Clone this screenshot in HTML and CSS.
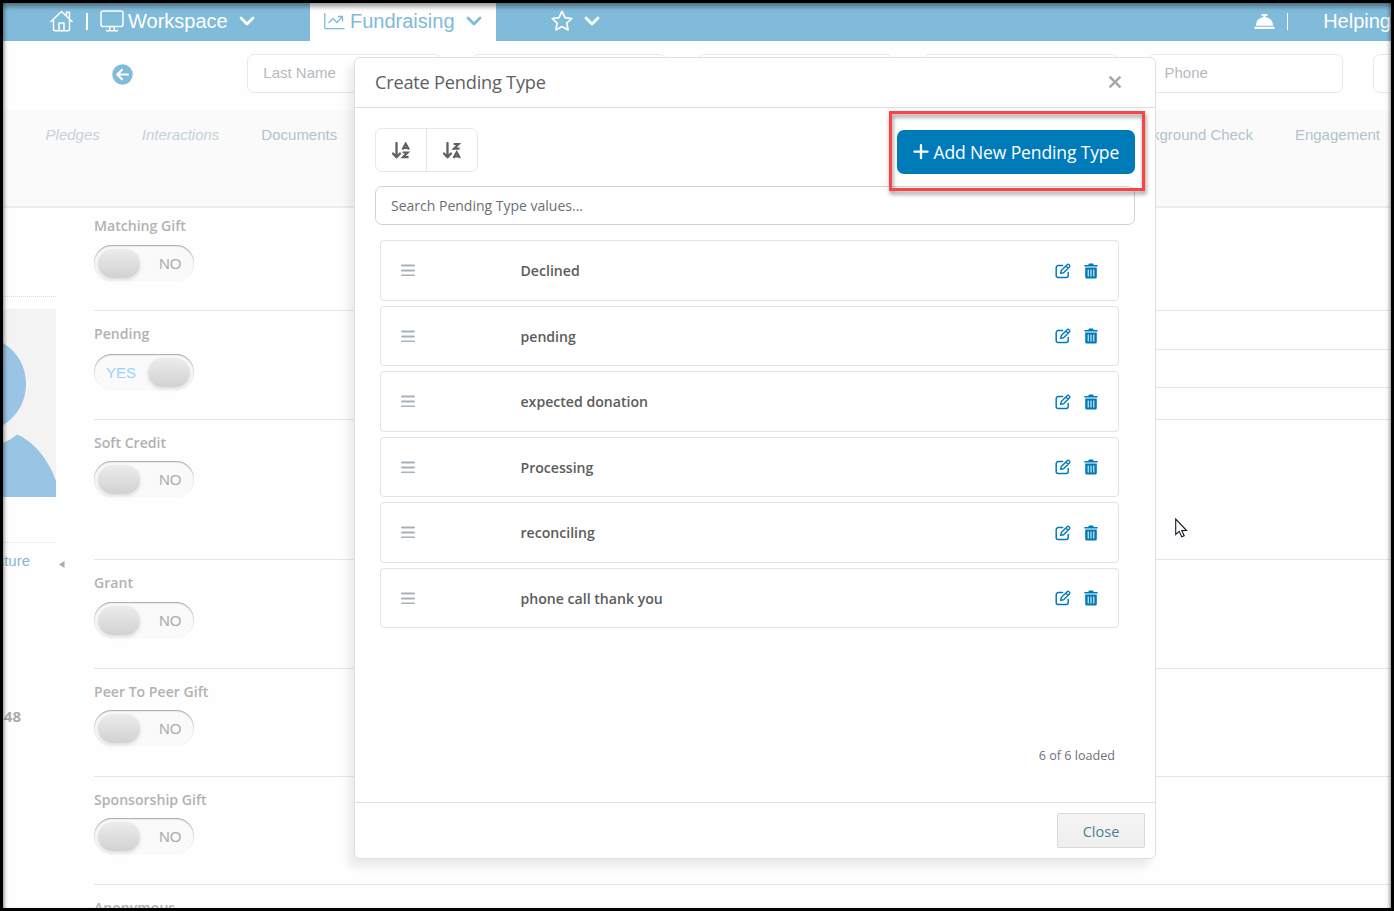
FILE: index.html
```html
<!DOCTYPE html>
<html lang="en">
<head>
  <meta charset="UTF-8">
  <meta name="viewport" content="width=device-width, initial-scale=1.0">
  <title>Create Pending Type</title>
  <link rel="stylesheet" href="styles.css">
</head>
<body>
  <!-- Shared icons -->
  <svg class="sprite" width="0" height="0">
    <symbol id="chevron" viewBox="0 0 16 10">
      <path d="M2 2l6 6 6-6" fill="none" stroke="currentColor" stroke-width="2.8" stroke-linecap="round" stroke-linejoin="round"/>
    </symbol>
    <symbol id="bars" viewBox="0 0 14 12">
      <path d="M1 1.500h12M1 6.500h12M1 11.500h12" fill="none" stroke="currentColor" stroke-width="1.900" stroke-linecap="round"/>
    </symbol>
    <symbol id="edit" viewBox="0 0 16 16">
      <path d="M7.6 2.6H3.2A2 2 0 0 0 1.2 4.6v8a2 2 0 0 0 2 2h8a2 2 0 0 0 2-2V9.4" fill="none" stroke="currentColor" stroke-width="1.5" stroke-linecap="round"/>
      <path d="M5.6 10.4l.7-2.9 5.8-5.8a1.3 1.3 0 0 1 1.9 0l.4.4a1.3 1.3 0 0 1 0 1.9L8.6 9.8zM10.8 3l2.3 2.3" fill="none" stroke="currentColor" stroke-width="1.4" stroke-linejoin="round"/>
    </symbol>
    <symbol id="trash" viewBox="0 0 14 16">
      <path d="M.4 1.900h3.800L5 .6h4l.8 1.300h3.800v1.700H.4z" fill="currentColor"/>
      <path fill-rule="evenodd" d="M1.2 4.6h11.6V14a1.5 1.5 0 0 1-1.5 1.5H2.7A1.5 1.5 0 0 1 1.2 14zM3.7 6.4v7.200h1V6.400zM6.500 6.400v7.200h1V6.400zM9.300 6.400v7.200h1V6.400z" fill="currentColor"/>
    </symbol>
  </svg>

  <div class="page">
    <div class="topbar">
      <div class="nav-workspace">
        <svg class="icon-home" width="23" height="22" viewBox="0 0 23 22" fill="none" stroke="currentColor" stroke-width="1.5" stroke-linecap="round" stroke-linejoin="round">
          <path d="M1 11.5L11.5 1.5 22 11.5M3.5 9.5v9.8a1.5 1.5 0 0 0 1.5 1.5h13a1.5 1.5 0 0 0 1.5-1.5V9.5M16.5 6V2.2h3v6.6M9 20.5v-7.5h5v7.5"/>
        </svg>
        <i class="separator"></i>
        <svg class="icon-monitor" width="24" height="22" viewBox="0 0 24 22" fill="none" stroke="currentColor" stroke-width="1.5" stroke-linecap="round">
          <rect x="1" y="1" width="22" height="15.5" rx="2"/>
          <path d="M9.8 16.5v3.8M14.2 16.5v3.8M6.5 20.7h11"/>
        </svg>
        <span>Workspace</span>
        <svg class="chevron" width="16" height="10"><use href="#chevron"/></svg>
      </div>
      <div class="nav-tab">
        <svg width="21" height="18" viewBox="0 0 21 18" fill="none" stroke="currentColor" stroke-width="1.3">
          <path d="M.8 1v14.5a1.2 1.2 0 0 0 1.2 1.2h18.5M4.5 11l4.5-4.5 4 4 5-5.5M14 4.5h4.5V9.5"/>
        </svg>
        <span>Fundraising</span>
        <svg class="chevron" width="16" height="10"><use href="#chevron"/></svg>
      </div>
      <div class="nav-favorites">
        <svg width="22" height="21" viewBox="0 0 22 21" fill="none" stroke="currentColor" stroke-width="1.7" stroke-linejoin="round">
          <path d="M11 1.3l3 6.3 6.8.9-5 4.7 1.3 6.7-6.1-3.3-6.1 3.3 1.3-6.7-5-4.7 6.8-.9z"/>
        </svg>
        <svg class="chevron" width="16" height="10"><use href="#chevron"/></svg>
      </div>
      <div class="nav-account">
        <svg width="21" height="15" viewBox="0 0 21 15" fill="currentColor">
          <path d="M7.500 0h6v1.800h-2v1.100A8.300 8.300 0 0 1 19 11.800H2a8.300 8.300 0 0 1 7.500-8.900V1.800h-2zM.5 12.700h20V15H.5z"/>
        </svg>
        <i class="separator"></i>
        <span class="org-name">Helping</span>
      </div>
    </div>

    <div class="filters">
      <svg class="back" width="21" height="21" viewBox="0 0 21 21">
        <circle cx="10.5" cy="10.5" r="10.2" fill="#80bbda"/>
        <path d="M16 10.5H5.500M10 5.700l-4.800 4.800 4.800 4.800" fill="none" stroke="#fff" stroke-width="2" stroke-linecap="round" stroke-linejoin="round"/>
      </svg>
      <div class="filter">Last Name</div>
      <div class="filter"></div>
      <div class="filter"></div>
      <div class="filter"></div>
      <div class="filter">Phone</div>
      <div class="filter"></div>
    </div>

    <div class="tabs">
      <span class="empty">Pledges</span>
      <span class="empty">Interactions</span>
      <span>Documents</span>
      <span class="tabs-end">Background Check</span>
      <span>Engagement</span>
    </div>

    <div class="content">
      <div class="sidebar">
        <div class="photo">
          <svg width="53" height="188" viewBox="0 0 53 188">
            <rect width="53" height="188" fill="#f3f3f3"/>
            <path d="M0 34C15 43 23 58 23 75S14 108 0 116zM0 134q8-3 14-8.5C33 133 48 156 53 172v16H0z" fill="#9ac4e3"/>
          </svg>
        </div>
        <div class="picture-link"><span>Picture</span></div>
        <svg class="collapse" width="6" height="7" viewBox="0 0 6 7"><path d="M5.5 0v7L0 3.5z" fill="#aaa"/></svg>
        <div class="record-id"><span>48</span></div>
      </div>

      <div class="fields">
        <div class="field first">
          <label>Matching Gift</label>
          <div class="toggle"><i class="knob"></i><span>NO</span></div>
        </div>
        <div class="field split">
          <div>
            <label>Pending</label>
            <div class="toggle on"><span>YES</span><i class="knob"></i></div>
          </div>
          <div class="lines"><div></div><div></div></div>
        </div>
        <div class="field tall">
          <label>Soft Credit</label>
          <div class="toggle"><i class="knob"></i><span>NO</span></div>
        </div>
        <div class="field">
          <label>Grant</label>
          <div class="toggle"><i class="knob"></i><span>NO</span></div>
        </div>
        <div class="field short">
          <label>Peer To Peer Gift</label>
          <div class="toggle"><i class="knob"></i><span>NO</span></div>
        </div>
        <div class="field short">
          <label>Sponsorship Gift</label>
          <div class="toggle"><i class="knob"></i><span>NO</span></div>
        </div>
        <div class="field short">
          <label>Anonymous</label>
        </div>
      </div>
    </div>

    <div class="modal">
      <div class="modal-header">
        <h2>Create Pending Type</h2>
        <svg width="14" height="14" viewBox="0 0 14 14"><path d="M2.500 2.500l9 9M11.500 2.500l-9 9" stroke="#aaa" stroke-width="2.500" stroke-linecap="square"/></svg>
      </div>
      <div class="modal-body">
        <div class="toolbar">
          <div class="sort-group">
            <div class="sort">
              <svg width="18" height="17" viewBox="0 0 18 17" fill="none" stroke="currentColor">
                <path d="M4.500 1v14M1 11.500l3.500 3.800L8 11.500" stroke-width="2.300" stroke-linecap="round" stroke-linejoin="round"/>
                <path d="M10.500 7.500l3.200-5.700 3.200 5.700M11.800 5.800h4M10.600 10.500h5l-4.600 4.600h5.600" stroke-width="2.200"/>
              </svg>
            </div>
            <div class="sort">
              <svg width="18" height="17" viewBox="0 0 18 17" fill="none" stroke="currentColor">
                <path d="M4.500 1v14M1 11.500l3.500 3.800L8 11.500" stroke-width="2.300" stroke-linecap="round" stroke-linejoin="round"/>
                <path d="M10.600 2h5L11 6.600h5.600M10.500 16l3.200-5.700 3.200 5.700M11.800 14.300h4" stroke-width="2.200"/>
              </svg>
            </div>
          </div>
          <div class="add-button">
            <svg width="16" height="16" viewBox="0 0 16 16"><path d="M8 1.200v13M1.500 7.700h13" stroke="#fff" stroke-width="2.300" stroke-linecap="round"/></svg>
            <span>Add New Pending Type</span>
            <i class="highlight"></i>
          </div>
        </div>
        <div class="search"><span>Search Pending Type values...</span></div>
        <div class="values">
          <div class="value">
            <svg class="drag" width="14" height="13" viewBox="0 0 14 13"><use href="#bars" width="14" height="12"/></svg>
            <span>Declined</span>
            <svg class="edit" width="16" height="16"><use href="#edit"/></svg>
            <svg class="trash" width="14" height="16"><use href="#trash"/></svg>
          </div>
          <div class="value">
            <svg class="drag" width="14" height="13" viewBox="0 0 14 13"><use href="#bars" width="14" height="12"/></svg>
            <span>pending</span>
            <svg class="edit" width="16" height="16"><use href="#edit"/></svg>
            <svg class="trash" width="14" height="16"><use href="#trash"/></svg>
          </div>
          <div class="value">
            <svg class="drag" width="14" height="13" viewBox="0 0 14 13"><use href="#bars" width="14" height="12"/></svg>
            <span>expected donation</span>
            <svg class="edit" width="16" height="16"><use href="#edit"/></svg>
            <svg class="trash" width="14" height="16"><use href="#trash"/></svg>
          </div>
          <div class="value">
            <svg class="drag" width="14" height="13" viewBox="0 0 14 13"><use href="#bars" width="14" height="12"/></svg>
            <span>Processing</span>
            <svg class="edit" width="16" height="16"><use href="#edit"/></svg>
            <svg class="trash" width="14" height="16"><use href="#trash"/></svg>
          </div>
          <div class="value">
            <svg class="drag" width="14" height="13" viewBox="0 0 14 13"><use href="#bars" width="14" height="12"/></svg>
            <span>reconciling</span>
            <svg class="edit" width="16" height="16"><use href="#edit"/></svg>
            <svg class="trash" width="14" height="16"><use href="#trash"/></svg>
          </div>
          <div class="value">
            <svg class="drag" width="14" height="13" viewBox="0 0 14 13"><use href="#bars" width="14" height="12"/></svg>
            <span>phone call thank you</span>
            <svg class="edit" width="16" height="16"><use href="#edit"/></svg>
            <svg class="trash" width="14" height="16"><use href="#trash"/></svg>
          </div>
        </div>
        <div class="loaded"><span>6 of 6 loaded</span></div>
      </div>
      <div class="modal-footer">
        <div class="close-button"><span>Close</span></div>
      </div>
    </div>

    <svg class="cursor" width="13" height="20" viewBox="0 0 13 20">
      <path d="M.7 1v15.500l3.500-3.200 2.500 5.400 2.500-1-2.400-5.200h4.800z" fill="#fff" stroke="#1b1726" stroke-width="1.100"/>
    </svg>
  </div>
</body>
</html>
```

FILE: styles.css
```css
* {
  box-sizing: border-box;
}
body {
  margin: 0;
  background: #fff;
  font-family: "Liberation Sans", Arial, sans-serif;
  font-size: 15px;
}
svg {
  display: block;
  flex: none;
}
.sprite {
  position: absolute;
}
.page {
  position: relative;
  width: 1394px;
  height: 911px;
  border: 3px solid #000;
  overflow: hidden;
  background: #fefefe;
}
.page::after {
  content: "";
  position: absolute;
  inset: 0;
  box-shadow: inset 0 5px 4px -1px rgba(0, 0, 0, 0.35), inset 4px 0 4px -3px rgba(0, 0, 0, 0.4), inset -4px 0 4px -3px rgba(0, 0, 0, 0.4);
}

/* Top bar */
.topbar {
  display: flex;
  height: 38px;
  background: #80bbda;
  color: #fff;
  font-size: 20px;
  line-height: 36px;
}
.separator {
  width: 2px;
  height: 17px;
  background: #fff;
}
.nav-workspace {
  display: flex;
  align-items: center;
  width: 307px;
  padding: 0 0 2px 46.5px;
}
.nav-workspace .separator {
  margin: 1px 12px 0 13px;
}
.nav-workspace .icon-monitor {
  margin-right: 4.500px;
}
.nav-workspace .chevron {
  margin: 0 0 0 11px;
}
.nav-tab {
  display: flex;
  align-items: center;
  width: 186px;
  padding: 0 0 2px 14px;
  background: #fefefe;
  color: #80bbda;
}
.nav-tab span {
  margin: 0 11px 0 5px;
}
.nav-favorites {
  display: flex;
  align-items: center;
  gap: 11px;
  padding: 0 0 2px 55px;
}
.nav-favorites svg:first-child {
  margin-top: -1px;
}
.nav-account {
  display: flex;
  align-items: center;
  width: 137px;
  margin-left: auto;
  padding-bottom: 2px;
}
.nav-account .separator {
  margin: 1px 0 0 12px;
}
.org-name {
  margin-left: 35px;
}

/* Search filters */
.filters {
  display: flex;
  height: 69px;
  padding: 13px 0 0 109px;
}
.back {
  margin: 10px 114px 0 0;
}
.filter {
  flex: none;
  width: 195px;
  height: 39px;
  margin-right: 30.3px;
  padding-left: 15.3px;
  border: 1px solid #e6e8eb;
  border-radius: 7px;
  background: #fff;
  color: #b5b9be;
  line-height: 36px;
}

/* Tabs */
.tabs {
  display: flex;
  gap: 42px;
  height: 98px;
  padding: 16px 11px 0 42.6px;
  background: #fafafa;
  border-bottom: 2px solid #ececec;
  color: #b1c3cc;
  line-height: 18px;
}
.tabs .empty {
  font-style: italic;
  color: #c6d1d6;
}
.tabs-end {
  margin-left: auto;
}

/* Record */
.content {
  display: flex;
}
.sidebar {
  width: 91px;
  flex: none;
}
.photo {
  width: 53px;
  height: 247px;
  margin-top: 88px;
  padding-top: 12px;
  border-top: 1px dotted #ddd;
  border-bottom: 1px dotted #ddd;
}
.picture-link {
  display: flex;
  justify-content: flex-end;
  width: 27px;
  height: 18px;
  margin-top: 9px;
  color: #80b9d8;
  line-height: 18px;
}
.collapse {
  margin: -9px 0 0 56px;
}
.record-id {
  display: flex;
  justify-content: flex-end;
  width: 18px;
  margin-top: 139px;
  color: #aaa;
  font-family: "Open Sans", sans-serif;
  font-weight: 700;
  line-height: 18px;
}
.fields {
  flex: 1;
}
.field {
  height: 109px;
  padding-top: 13px;
  border-bottom: 1px solid #e6e6e6;
}
.field.first {
  height: 103px;
  padding-top: 8px;
}
.field.tall {
  height: 140px;
}
.field.short {
  height: 108px;
}
.field label {
  display: block;
  height: 20px;
  color: #b2b2b2;
  font-family: "Open Sans", sans-serif;
  font-size: 14.1px;
  font-weight: 600;
  line-height: 20px;
}
.split {
  display: flex;
  padding-top: 0;
}
.split > div:first-child {
  flex: 1;
  padding-top: 13px;
}
.lines {
  width: 240px;
}
.lines div {
  height: 38.500px;
  border-bottom: 1px solid #e6e6e6;
}
.toggle {
  display: flex;
  align-items: center;
  width: 100px;
  height: 36px;
  margin-top: 9px;
  padding: 0 4px;
  border-radius: 18px;
  background: #fafafa;
  box-shadow: inset 0 1px 1px rgba(0, 0, 0, 0.25), inset 0 1px 2px rgba(0, 0, 0, 0.12);
  color: #adadad;
}
.field.tall .toggle,
.field.short .toggle {
  margin-top: 8px;
}
.toggle span {
  margin-left: 19px;
}
.toggle.on {
  margin-top: 10px;
}
.toggle.on span {
  margin: 0 12px 0 8px;
  color: #99d2fb;
}
.knob {
  width: 42px;
  height: 29px;
  border-radius: 15px;
  background: linear-gradient(#ececec, #d1d1d1);
  box-shadow: 0 2px 4px rgba(0, 0, 0, 0.12);
}

/* Modal */
.modal {
  position: absolute;
  left: 351px;
  top: 54px;
  display: flex;
  flex-direction: column;
  width: 802px;
  height: 802px;
  border: 1px solid #dcdfe4;
  border-radius: 6px;
  background: #fff;
  box-shadow: -6px 8px 8px rgba(0, 0, 0, 0.08);
  font-family: "Open Sans", sans-serif;
  color: #606060;
}
.modal-header {
  display: flex;
  align-items: center;
  justify-content: space-between;
  height: 50px;
  padding: 0 33px 2px 20px;
  border-bottom: 1px solid #dcdfe4;
}
.modal-header h2 {
  margin: 0;
  font-size: 18.2px;
  font-weight: 400;
  letter-spacing: -0.22px;
}
.modal-body {
  flex: 1;
  padding: 20px 20px 0;
}
.toolbar {
  display: flex;
  justify-content: space-between;
  height: 58px;
}
.sort-group {
  display: flex;
  width: 103px;
  height: 44px;
  border: 1px solid #e6e8ea;
  border-radius: 7px;
}
.sort {
  display: flex;
  flex: 1;
  align-items: center;
  justify-content: center;
}
.sort + .sort {
  border-left: 1px solid #e6e8ea;
}
.add-button {
  position: relative;
  display: flex;
  align-items: center;
  gap: 4.500px;
  width: 238px;
  height: 44px;
  margin-top: 2px;
  padding: 0 0 1px 16px;
  border-radius: 7px;
  background: #007bb9;
  color: #fff;
  font-size: 17.5px;
  letter-spacing: -0.12px;
  white-space: nowrap;
}
.highlight {
  position: absolute;
  left: -8px;
  top: -19px;
  width: 256px;
  height: 80px;
  border: 3px solid #fb4345;
  filter: drop-shadow(1px 3px 2px rgba(0, 0, 0, 0.45));
}
.search {
  display: flex;
  align-items: center;
  height: 39px;
  padding-left: 15px;
  border: 1px solid #ced4da;
  border-radius: 7px;
  font-size: 14px;
  color: #6a6f74;
}
.values {
  display: flex;
  flex-direction: column;
  gap: 5px;
  margin: 15px 16px 0 4.5px;
}
.value {
  display: flex;
  align-items: center;
  height: 60.5px;
  padding: 0.6px 20px 0 20.5px;
  border: 1px solid #dfe2e6;
  border-radius: 4px;
  color: #5c5c5c;
  font-size: 14.1px;
  font-weight: 600;
}
.drag {
  margin-right: 105.5px;
  color: #a7b1bb;
}
.edit {
  margin-left: auto;
  margin-right: 13.5px;
  color: #007bb9;
}
.trash {
  color: #007bb9;
}
.loaded {
  display: flex;
  justify-content: flex-end;
  margin: 119px 20px 0 0;
  font-size: 12.6px;
  line-height: 18px;
  color: #6c7278;
}
.modal-footer {
  display: flex;
  justify-content: flex-end;
  height: 56px;
  padding: 10px 10px 0 0;
  border-top: 1px solid #dcdfe4;
}
.close-button {
  width: 88px;
  height: 35px;
  border: 1px solid #d9d9d9;
  border-radius: 2px;
  background: linear-gradient(#f5f5f5, #efefef);
  color: #4f7d92;
  font-size: 14.5px;
  line-height: 35px;
  text-align: center;
}

.cursor {
  position: absolute;
  left: 1172px;
  top: 515px;
}
```
